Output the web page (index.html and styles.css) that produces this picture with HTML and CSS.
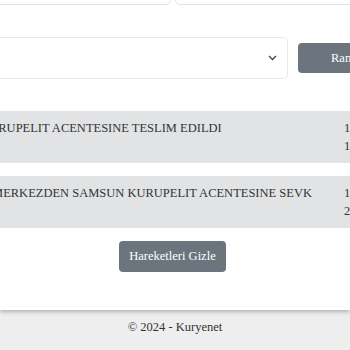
FILE: index.html
```html
<!DOCTYPE html>
<html lang="tr">

<head>
    <meta charset="UTF-8">
    <meta name="viewport" content="width=device-width, initial-scale=1.0">
    <title>Kargo Takip - Kuryenet</title>
    <link rel="stylesheet" href="styles.css">
</head>

<body>
    <main class="content">
        <div class="wide">
            <div class="filters">
                <div class="filter-box"></div>
                <div class="filter-box"></div>
            </div>

            <div class="search-row">
                <div class="select-box">
                    <span class="placeholder">Seçiniz...</span>
                    <svg class="chevron" width="9" height="6" viewBox="0 0 9 6">
                        <path d="M1 1l3.5 3.5L8 1" fill="none" stroke="#444" stroke-width="1.3" />
                    </svg>
                </div>
                <button type="button" class="btn">Randevu Al</button>
            </div>

            <div class="moves">
                <div class="move">
                    <div class="move-text">SAMSUN KURUPELIT ACENTESINE TESLIM EDILDI</div>
                    <div class="move-date">
                        <div>12.03.2024</div>
                        <div>14:35</div>
                    </div>
                </div>
                <div class="move">
                    <div class="move-text">TRANSFER MERKEZDEN SAMSUN KURUPELIT ACENTESINE SEVK</div>
                    <div class="move-date">
                        <div>11.03.2024</div>
                        <div>22:10</div>
                    </div>
                </div>
            </div>
        </div>

        <div class="actions">
            <button type="button" class="btn">Hareketleri Gizle</button>
        </div>
    </main>

    <footer>
        <p>&copy; 2024 - Kuryenet</p>
    </footer>
</body>

</html>
```

FILE: styles.css
```css
body {
    font-family: "Liberation Serif", "Times New Roman", serif;
    font-size: 12.5px;
    margin: 0;
    padding: 0;
    overflow: hidden;
    background-color: #eeeeee;
    color: #333;
}

.content {
    position: relative;
    z-index: 1;
    background-color: white;
    margin-top: -37px;
    padding-bottom: 38px;
    box-shadow: 0 2px 4px rgba(0, 0, 0, 0.25);
}

.wide {
    width: 520px;
    margin-left: -100px;
}

.filters {
    display: flex;
    gap: 4px;
}

.filter-box {
    height: 40px;
    border: 1px solid #e3e3e3;
    border-radius: 0 0 5px 5px;
    background-color: white;
}

.filter-box:first-child {
    width: 269px;
}

.filter-box:last-child {
    flex: 1;
}

.search-row {
    display: flex;
    align-items: center;
    gap: 10px;
    margin-top: 32px;
}

.select-box {
    width: 388px;
    height: 42px;
    border: 1px solid #e8e8e8;
    border-radius: 5px;
    display: flex;
    align-items: center;
    justify-content: space-between;
    padding: 0 10px 0 12px;
    box-sizing: border-box;
}

.placeholder {
    color: #aaa;
    visibility: hidden;
}

.btn {
    background-color: #6c757d;
    color: white;
    border: none;
    border-radius: 4px;
    font-family: inherit;
    font-size: 12.5px;
    padding: 0 10px;
    height: 30px;
    cursor: pointer;
}

.search-row .btn {
    width: 110px;
    padding-left: 33px;
    text-align: left;
    white-space: nowrap;
}

.moves {
    margin-top: 32px;
    display: flex;
    flex-direction: column;
    gap: 13px;
}

.move {
    display: flex;
    background-color: #e2e3e5;
    padding: 8px 0 8px 25px;
    line-height: 18px;
}

.move-text {
    width: 419px;
    white-space: nowrap;
}

.move-date {
    white-space: nowrap;
}

.actions {
    display: flex;
    justify-content: center;
    margin-top: 13px;
    padding-right: 5px;
}

.actions .btn {
    height: 31px;
}

footer {
    text-align: center;
    padding: 8px 0 20px;
}

footer p {
    margin: 0;
    line-height: 18px;
}
```
